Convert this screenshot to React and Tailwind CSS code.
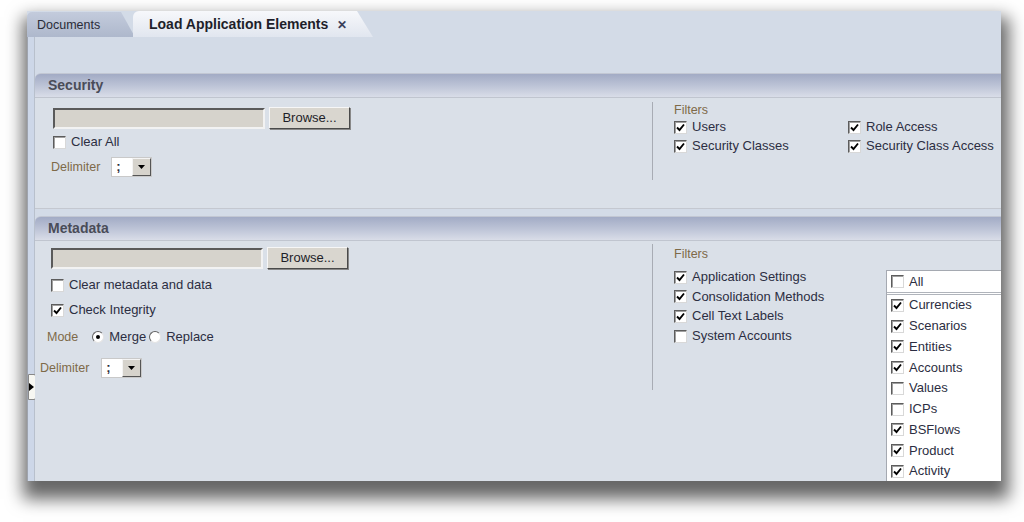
import React from "react";

const font = { fontFamily: '"Liberation Sans", Arial, sans-serif' };

function Check({ checked }) {
  return (
    <span className="inline-flex w-[13px] h-[13px] shrink-0 items-center justify-center bg-white border border-t-[#5c5c5c] border-l-[#5c5c5c] border-r-[#d8d8d8] border-b-[#d8d8d8] shadow-[inset_1px_1px_0_#a0a0a0]">
      {checked && (
        <svg width="9" height="9" viewBox="0 0 9 9">
          <path d="M1 4.5 L3.5 7 L8 1.5" stroke="#000" strokeWidth="1.9" fill="none" />
        </svg>
      )}
    </span>
  );
}

function CheckRow({ label, checked, className = "" }) {
  return (
    <div className={"flex items-center gap-[5px] h-[14px] text-[13px] leading-[14px] text-[#2c2e42] " + className}>
      <Check checked={checked} />
      <span>{label}</span>
    </div>
  );
}

function Radio({ on }) {
  return (
    <span className="inline-flex w-[12px] h-[12px] rounded-full bg-white border border-t-[#606060] border-l-[#606060] border-r-[#e4e4e4] border-b-[#e4e4e4] items-center justify-center">
      {on && <span className="w-[4px] h-[4px] rounded-full bg-black" />}
    </span>
  );
}

function Select() {
  return (
    <div className="flex w-[41px] h-[20px] border border-[#c9c9c9] bg-white">
      <div className="flex-1 pl-[4px] text-[13px] leading-[18px] text-[#2b2d3c] font-bold">;</div>
      <div className="w-[19px] h-[18px] bg-[#d6d3cc] border border-t-[#f4f4f4] border-l-[#f4f4f4] border-r-[#555] border-b-[#555] flex items-center justify-center">
        <svg width="7" height="4" viewBox="0 0 7 4">
          <path d="M0 0 H7 L3.5 4 Z" fill="#000" />
        </svg>
      </div>
    </div>
  );
}

function FileRow() {
  return (
    <div className="flex items-center gap-[4px] h-[22px]">
      <div className="w-[212px] h-[21px] bg-[#d6d3cc] border-2 border-t-[#5a5a5a] border-l-[#5a5a5a] border-r-[#f2f2f2] border-b-[#f2f2f2]" />
      <button className="w-[81px] h-[22px] bg-[#d9d6cf] text-[13px] text-[#1e1e28] border border-t-[#f6f6f6] border-l-[#f6f6f6] border-r-[#4a4a4a] border-b-[#4a4a4a] shadow-[1px_1px_0_#888]">
        Browse...
      </button>
    </div>
  );
}

function Header({ title }) {
  return (
    <div className="h-[25px] rounded-tl-[6px] border-t border-[#c2c7d3] bg-gradient-to-b from-[#a2abc5] via-[#bcc3d6] to-[#d9dde8] flex items-center pl-[13px] text-[14px] font-bold text-[#4a4c58] border-b border-b-[#c0c5cf]">
      {title}
    </div>
  );
}

export default function App() {
  const list = [
    ["Currencies", true],
    ["Scenarios", true],
    ["Entities", true],
    ["Accounts", true],
    ["Values", false],
    ["ICPs", false],
    ["BSFlows", true],
    ["Product", true],
    ["Activity", true],
  ];
  return (
    <div className="w-[1024px] h-[522px] bg-white overflow-hidden pt-[11px] pl-[27px]" style={font}>
      <div className="w-[974px] h-[470px] flex flex-col bg-[#d3dbe7] shadow-[2px_12px_16px_6px_rgba(0,0,0,0.6)] overflow-hidden">
        {/* tabs */}
        <div className="h-[27px] flex items-end bg-[#d3dbe7]">
          <div className="w-[108px] h-[25px] rounded-tl-[5px] bg-gradient-to-b from-[#c3cbdc] to-[#aeb8cc] flex items-center pl-[10px] pt-[1px] text-[12.5px] text-[#2a2c38] [clip-path:polygon(0_0,94px_0,108px_100%,0_100%)]">
            Documents
          </div>
          <div className="w-[240px] h-[26px] -ml-[2px] rounded-tl-[6px] bg-gradient-to-b from-[#f7f8fb] to-[#e1e6ef] flex items-center pl-[16px] pt-[1px] text-[14px] font-bold text-[#1e1f2a] [clip-path:polygon(0_0,224px_0,240px_100%,0_100%)]">
            Load Application Elements
            <span className="ml-[9px] text-[12px] text-[#39405a]">✕</span>
          </div>
        </div>

        <div className="flex-1 flex border-l border-[#9ea3ad]">
          {/* left strip */}
          <div className="w-[7px] bg-[#cdd7e8] border-r border-[#b8c0cc] flex flex-col">
            <div className="h-[337px]" />
            <div className="w-[8px] h-[26px] bg-[#f7f7f2] border border-[#888] rounded-r-[2px] flex items-center">
              <svg width="5" height="8" viewBox="0 0 5 8">
                <path d="M0 0 L5 4 L0 8 Z" fill="#000" />
              </svg>
            </div>
          </div>

          <div className="flex-1 flex flex-col pt-[36px]">
            {/* Security */}
            <div className="flex flex-col">
              <Header title="Security" />
              <div className="h-[111px] bg-[#dae0e8] border-b border-[#c4c8d0] flex">
                <div className="w-[617px] pl-[18px] pt-[9px] flex flex-col">
                  <FileRow />
                  <CheckRow label="Clear All" className="mt-[6px]" />
                  <div className="flex items-center gap-[11px] mt-[8px] -ml-[2px]">
                    <span className="text-[12.5px] text-[#7e6a48]">Delimiter</span>
                    <Select />
                  </div>
                </div>
                <div className="w-px h-[78px] mt-[4px] bg-[#a8acb4]" />
                <div className="pl-[21px] pt-[5px] flex flex-col">
                  <span className="text-[12.5px] text-[#7e6a48] leading-[14px]">Filters</span>
                  <div className="grid grid-cols-[174px_auto] gap-y-[5px] mt-[3px]">
                    <CheckRow label="Users" checked />
                    <CheckRow label="Role Access" checked />
                    <CheckRow label="Security Classes" checked />
                    <CheckRow label="Security Class Access" checked />
                  </div>
                </div>
              </div>
            </div>

            {/* Metadata */}
            <div className="flex flex-col mt-[7px] flex-1">
              <Header title="Metadata" />
              <div className="flex-1 bg-[#dae0e8] flex">
                <div className="w-[617px] flex flex-col pt-[6px]">
                  <div className="pl-[16px] flex flex-col">
                    <FileRow />
                    <CheckRow label="Clear metadata and data" className="mt-[9px]" />
                    <CheckRow label="Check Integrity" checked className="mt-[11px]" />
                    <div className="flex items-center h-[14px] mt-[13px] -ml-[4px] text-[13px] text-[#2c2e42]">
                      <span className="text-[#7e6a48] text-[12.5px] mr-[14px]">Mode</span>
                      <Radio on />
                      <span className="ml-[5px] mr-[3px]">Merge</span>
                      <Radio />
                      <span className="ml-[5px]">Replace</span>
                    </div>
                  </div>
                  <div className="flex items-center gap-[12px] mt-[14px] pl-[5px]">
                    <span className="text-[12.5px] text-[#7e6a48]">Delimiter</span>
                    <Select />
                  </div>
                </div>
                <div className="w-px h-[146px] mt-[3px] bg-[#a8acb4]" />
                <div className="flex-1 pl-[21px] pt-[6px] flex">
                  <div className="flex flex-col w-[212px]">
                    <span className="text-[12.5px] text-[#7e6a48] leading-[14px]">Filters</span>
                    <div className="flex flex-col gap-[5.7px] mt-[9px]">
                      <CheckRow label="Application Settings" checked />
                      <CheckRow label="Consolidation Methods" checked />
                      <CheckRow label="Cell Text Labels" checked />
                      <CheckRow label="System Accounts" />
                    </div>
                  </div>
                  <div className="mt-[23px] flex-1 bg-white border-l border-t border-[#a5a9b1] flex flex-col">
                    <div className="h-[24px] flex items-center pl-[4px] border-b-[3px] border-double border-[#b0b4bb]">
                      <CheckRow label="All" />
                    </div>
                    <div>
                      {list.map(([l, c]) => (
                        <div key={l} className="h-[20.75px] flex items-center pl-[4px]">
                          <CheckRow label={l} checked={c} />
                        </div>
                      ))}
                    </div>
                  </div>
                </div>
              </div>
            </div>
          </div>
        </div>
      </div>
    </div>
  );
}
